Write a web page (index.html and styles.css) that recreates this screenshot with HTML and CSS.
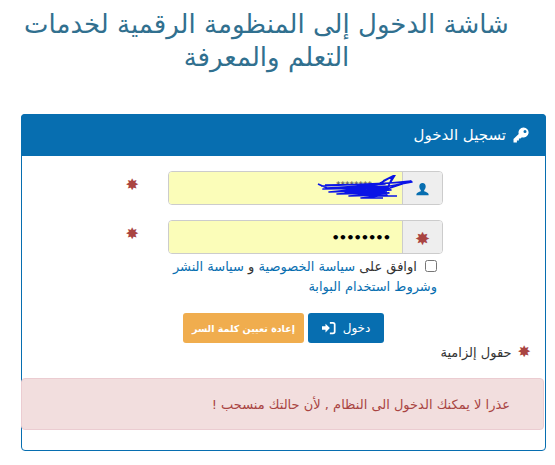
FILE: index.html
```html
<!DOCTYPE html>
<html lang="ar" dir="rtl">
<head>
  <meta charset="UTF-8" />
  <meta name="viewport" content="width=device-width, initial-scale=1.0" />
  <title>تسجيل الدخول</title>
  <link rel="stylesheet" href="styles.css">
</head>
<body>

  <h1 class="page-title">شاشة الدخول إلى المنظومة الرقمية لخدمات التعلم والمعرفة</h1>

  <div class="panel">
    <div class="panel-heading">
      <svg class="icon-key" viewBox="0 0 16 16" width="16" height="16">
        <path fill="#fff" d="M10.500 0.500a5 5 0 0 0-4.800 6.400L0.500 12.100V15.500h3.400v-2h2v-2h1.600l1.400-1.300a5 5 0 1 0 1.600-9.700zM12 3a1.500 1.500 0 1 1 0 3 1.500 1.500 0 0 1 0-3z"/>
      </svg>
      <span>تسجيل الدخول</span>
    </div>

    <form class="panel-body">
      <div class="form-row">
        <div class="input-group">
          <span class="addon">
            <svg class="icon-user" viewBox="0 0 16 16" width="15" height="15">
              <path fill="#076eb0" d="M8 1c2.200 0 3.400 1.600 3.400 3.700 0 1.500-.7 3-1.600 3.800v1.300c1.800.7 4.700 1.500 4.700 3.200v1H1.500v-1c0-1.700 2.900-2.500 4.700-3.200V8.500C5.300 7.700 4.600 6.200 4.600 4.700 4.600 2.600 5.800 1 8 1z"/>
            </svg>
          </span>
          <div class="field">
            <span class="field-text">********</span>
            <svg class="scribble" viewBox="0 0 100 26" width="100" height="26">
              <path fill="none" stroke="#0a14e6" stroke-width="1.700" stroke-linejoin="round" d="M3 9 L12 13 L62 10 L78 1 L72 14 L60 21 L82 21 M6 11 L97 7 L64 13 L8 14 L74 11 L14 17 L76 15 L22 19 L74 18 L34 21 L72 20 L46 23 L68 23 M68 6 L80 0 L75 8 L96 6 L72 14 M10 10 L70 9 L16 13 L74 13 M24 16 L70 14 L30 18 L72 17"/>
            </svg>
          </div>
        </div>
        <span class="star">✸</span>
      </div>

      <div class="form-row">
        <div class="input-group">
          <span class="addon"><span class="star star-big">✸</span></span>
          <div class="field">
            <span class="dots">••••••••</span>
          </div>
        </div>
        <span class="star">✸</span>
      </div>

      <div class="agree">
        <input type="checkbox" class="agree-box" />
        اوافق على <a href="#">سياسة الخصوصية</a> و <a href="#">سياسة النشر</a> <a href="#">وشروط استخدام البوابة</a>
      </div>

      <div class="buttons">
        <button type="button" class="btn btn-login">
          <svg viewBox="0 0 16 16" width="14" height="14">
            <path fill="#fff" d="M0 6h4V3l5 5-5 5v-3H0zM9 1h3.500A3 3 0 0 1 15.500 4v8a3 3 0 0 1-3 3H9v-2h3.500a1 1 0 0 0 1-1V4a1 1 0 0 0-1-1H9z"/>
          </svg>
          <span>دخول</span>
        </button>
        <button type="button" class="btn btn-reset">إعادة تعيين كلمة السر</button>
      </div>

      <div class="required-note">
        <span class="star">✸</span>
        <span>حقول إلزامية</span>
      </div>

      <div class="alert">عذرا لا يمكنك الدخول الى النظام , لأن حالتك منسحب !</div>
    </form>
  </div>

</body>
</html>
```

FILE: styles.css
```css
* {
  box-sizing: border-box;
}

body {
  margin: 0;
  padding: 0 9px 0 21px;
  background: #fff;
  font-family: "DejaVu Sans", "Noto Sans", sans-serif;
  font-size: 13px;
  color: #333;
}

.page-title {
  margin: 0 0 0 -16px;
  padding: 8px 18px 0 0;
  height: 114px;
  font-size: 26px;
  font-weight: normal;
  line-height: 33px;
  text-align: center;
  color: #31708f;
}

.panel {
  width: 525px;
  height: 337px;
  border: 1px solid #076eb0;
  border-radius: 4px;
}

.panel-heading {
  display: flex;
  align-items: center;
  gap: 7px;
  height: 42px;
  margin: -1px -1px 0;
  padding: 0 17px;
  background: #076eb0;
  border-radius: 4px 4px 0 0;
  color: #fff;
  font-size: 15px;
}

.panel-body {
  padding-top: 15px;
}

.form-row {
  display: flex;
  align-items: flex-start;
  height: 49px;
  padding-right: 102px;
}

.input-group {
  display: flex;
  width: 275px;
  height: 34px;
  border: 1px solid #ccc;
  border-radius: 4px;
  overflow: hidden;
}

.addon {
  display: flex;
  align-items: center;
  justify-content: center;
  width: 40px;
  background: #eee;
  border-left: 1px solid #ccc;
}

.icon-user {
  margin-top: 3px;
}

.field {
  position: relative;
  flex: 1;
  display: flex;
  align-items: center;
  padding-right: 12px;
  background: #fbfdb9;
}

.field-text {
  margin-top: -6px;
  padding-right: 18px;
  color: #444;
  font-size: 9px;
}

.scribble {
  position: absolute;
  top: 3px;
  right: -13px;
}

.dots {
  color: #000;
  font-size: 13px;
  font-weight: bold;
  letter-spacing: -1px;
}

.star {
  color: #a94442;
  font-size: 16px;
  line-height: 1;
}

.star-big {
  font-size: 18px;
  margin-top: 3px;
}

.form-row > .star {
  margin-right: 29px;
  margin-top: 6px;
}

.agree {
  width: 268px;
  margin: -12px 108px 0 0;
  line-height: 20px;
  color: #333;
}

.agree-box {
  width: 12px;
  height: 12px;
  margin: 0 0 0 4px;
  vertical-align: -1px;
}

.agree a {
  color: #076eb0;
  text-decoration: none;
}

.buttons {
  display: flex;
  gap: 4px;
  margin: 16px 161px 0 0;
}

.btn {
  height: 30px;
  padding: 0;
  border: 1px solid transparent;
  border-radius: 3px;
  color: #fff;
  font-family: inherit;
  font-size: 9.500px;
}

.btn-login {
  display: flex;
  align-items: center;
  justify-content: center;
  gap: 7px;
  width: 76px;
  background: #076eb0;
  flex-direction: row-reverse;
  font-size: 12px;
}

.btn-reset {
  width: 121px;
  background: #f0ad4e;
  font-weight: bold;
}

.required-note {
  display: flex;
  align-items: center;
  gap: 6px;
  margin: 0 14px 0 0;
  height: 18px;
}

.alert {
  display: flex;
  align-items: center;
  height: 52px;
  margin: 17px 1px 0 -1px;
  padding-right: 33px;
  background: #f2dede;
  border: 1px solid #ebccd1;
  border-radius: 4px;
  color: #a94442;
}
```
